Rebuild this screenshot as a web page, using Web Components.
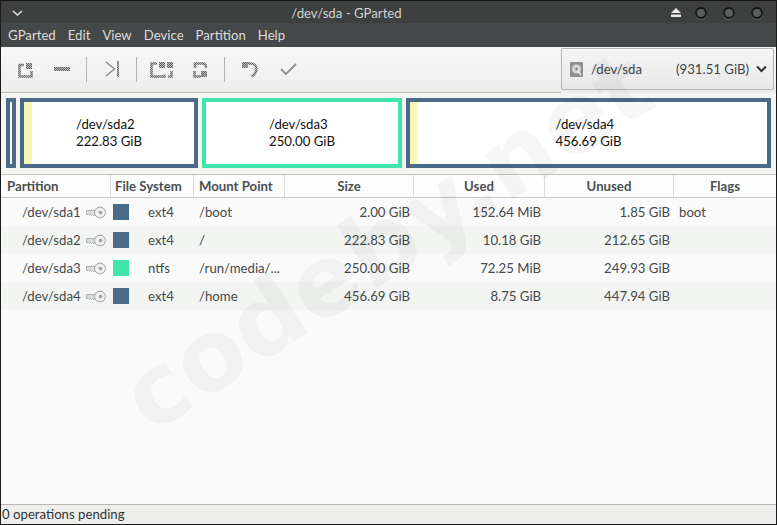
<!DOCTYPE html>
<html>
<head>
<meta charset="utf-8">
<title>/dev/sda - GParted</title>
<style>
  html, body { margin: 0; height: 100%; background: #fafafa; }
  body { font: 13.2px Lato, "Open Sans", sans-serif; color: #2e3436; overflow: hidden; }
</style>
</head>
<body>
<gp-window>
  <gp-titlebar slot="top">/dev/sda - GParted</gp-titlebar>
  <gp-menubar slot="top"></gp-menubar>
  <gp-toolbar slot="top"></gp-toolbar>
  <gp-diskmap slot="top"></gp-diskmap>
  <gp-table></gp-table>
  <gp-statusbar slot="bottom">0 operations pending</gp-statusbar>
</gp-window>
<gp-watermark>codeby.net</gp-watermark>

<script>
// checker fill so the toolbar icons get the same dithered look as the screenshot
const DITHER = `<defs><pattern id="d" width="2" height="2" patternUnits="userSpaceOnUse">
  <rect width="2" height="2" fill="#b8b8b8"/><rect width="1" height="1" fill="#666"/><rect x="1" y="1" width="1" height="1" fill="#666"/>
</pattern></defs>`;

class GpWindow extends HTMLElement {
  constructor() {
    super();
    this.attachShadow({ mode: 'open' });
    this.shadowRoot.innerHTML = `
      <style>
        :host { display: flex; flex-direction: column; box-sizing: border-box; width: 777px; height: 525px;
          border: 1px solid #1c1c1c; border-top: 0; background: #fafafa; }
        .main { flex: 1; min-height: 0; display: flex; flex-direction: column; }
      </style>
      <slot name="top"></slot>
      <div class="main"><slot></slot></div>
      <slot name="bottom"></slot>`;
  }
}

class GpTitlebar extends HTMLElement {
  constructor() {
    super();
    this.attachShadow({ mode: 'open' });
    this.shadowRoot.innerHTML = `
      <style>
        :host { display: flex; align-items: center; height: 23px; box-sizing: border-box; padding: 1px 13px 0 10px;
          background: #3e3f3f; border-top: 1px solid #151515; color: #d2d3d3; position: relative; }
        .menu { width: 13px; height: 8px; }
        .title { position: absolute; left: 0; right: 84px; text-align: center; top: 2px; line-height: 20px; }
        .right { margin-left: auto; display: flex; align-items: center; gap: 16px; z-index: 1; }
        .eject { width: 10px; height: 9px; margin-right: -2px; }
        .dot { width: 12px; height: 12px; border-radius: 50%; box-sizing: border-box;
          background: #5c5f5f; border: 2px solid #161616; box-shadow: 0 1px 0 #666; }
      </style>
      <svg class="menu" viewBox="0 0 13 8"><path d="M2 2l4.5 4L11 2" fill="none" stroke="#e2e2e2" stroke-width="1.6"/></svg>
      <span class="title"><slot></slot></span>
      <div class="right">
        <svg class="eject" viewBox="0 0 10 9"><path d="M5 0l5 5H0z M0 6.5h10V9H0z" fill="#ececec"/></svg>
        <span class="dot"></span><span class="dot"></span><span class="dot"></span>
      </div>`;
  }
}

class GpMenubar extends HTMLElement {
  constructor() {
    super();
    this.attachShadow({ mode: 'open' });
    const items = ['GParted', 'Edit', 'View', 'Device', 'Partition', 'Help'];
    this.shadowRoot.innerHTML = `
      <style>
        :host { display: flex; height: 24px; align-items: center; box-sizing: border-box; padding: 0 7px 1px;
          gap: 12px; background: #454848; color: #dcdcdc; }
      </style>
      ${items.map(i => `<span>${i}</span>`).join('')}`;
  }
}

class GpToolbar extends HTMLElement {
  constructor() {
    super();
    this.attachShadow({ mode: 'open' });
    const ic = (body, w = 20) => `<svg width="${w}" height="20" viewBox="0 0 ${w} 20">${body}</svg>`;
    const gap = w => `<span style="width:${w}px"></span>`;
    const stroke = 'fill="none" stroke="url(#d)" stroke-width="2.6"';
    this.shadowRoot.innerHTML = `
      <style>
        :host { display: flex; align-items: flex-start; height: 46px; box-sizing: border-box;
          background: linear-gradient(#f7f7f7, #eceeec); }
        .icons { display: flex; flex: 1; align-items: center; box-sizing: border-box; height: 46px; padding: 0 0 1px 15px;
          border-bottom: 1px solid #b8b8b4; }
        svg { display: block; flex: none; }
        .sep { width: 1px; height: 25px; background: #b3b3b3; }
        .combo { margin: 1px 2px 0 0; width: 213px; height: 42px; box-sizing: border-box; display: flex; align-items: center;
          padding: 0 6px 0 8px; background: linear-gradient(#f5f5f5, #e8e8e8); border: 1px solid #b3b3b3; border-radius: 2px;
          box-shadow: 0 1px 0 #fff inset; color: #3f4547; }
        .dev { margin-left: 8px; }
        .size { margin-left: auto; margin-right: 7px; }
      </style>
      <div class="icons">
        <svg width="0" height="0" style="position:absolute">${DITHER}</svg>
        ${ic(`<path d="M8 6H3.5v11.5h12V12" ${stroke}/><rect x="10" y="4" width="6" height="6" fill="url(#d)"/>`, 17)}
        ${gap(21)}
        ${ic(`<rect x="0" y="8" width="16" height="4" fill="url(#d)"/>`, 16)}
        ${gap(16)}<span class="sep"></span>${gap(18)}
        ${ic(`<path d="M1 3l8.5 7L1 17" fill="none" stroke="#888" stroke-width="1.3"/><rect x="12" y="2" width="2" height="16" fill="url(#d)"/>`, 14)}
        ${gap(17)}<span class="sep"></span>${gap(13)}
        ${ic(`<path d="M7 4.5H1.5v13h13v-2" ${stroke}/><rect x="9" y="3" width="6" height="6" fill="url(#d)"/><rect x="17" y="3" width="6" height="6" fill="url(#d)"/><path d="M21.5 12v5.5H18" ${stroke}/>`, 23)}
        ${gap(20)}
        ${ic(`<path d="M2 9V4.5h9l2 2V9 M1.5 12v5.5H8" ${stroke}/><rect x="8" y="12" width="6" height="6" fill="url(#d)"/>`, 14)}
        ${gap(17)}<span class="sep"></span>${gap(17)}
        ${ic(`<rect x="0" y="3" width="6" height="6" fill="url(#d)"/><path d="M5 4.5h4a5.5 5.5 0 0 1 5.5 5.5c0 3-2 5.5-5 7.5" ${stroke}/>`)}
        ${gap(18)}
        ${ic(`<path d="M1 10l5 5L16 5" fill="none" stroke="#8f8f8f" stroke-width="1.8"/>`, 17)}
      </div>
      <div class="combo">
        <svg width="13" height="15" viewBox="0 0 13 15">
          <rect width="13" height="15" rx="1" fill="#8e9191"/>
          <circle cx="6.5" cy="7" r="4.5" fill="#d6d8d8"/><circle cx="6.5" cy="7" r="1.3" fill="#7a7d7d"/>
          <path d="M8 9l3 4" stroke="#eee" stroke-width="1.4"/>
        </svg>
        <span class="dev">/dev/sda</span>
        <span class="size">(931.51 GiB)</span>
        <svg width="11" height="8" viewBox="0 0 11 8"><path d="M1 1.5l4.5 4.5L10 1.5" fill="none" stroke="#2e3436" stroke-width="2"/></svg>
      </div>`;
  }
}

class GpPartition extends HTMLElement {
  constructor() {
    super();
    this.attachShadow({ mode: 'open' });
    const used = this.getAttribute('used') || 0;
    this.shadowRoot.innerHTML = `
      <style>
        :host { display: block; box-sizing: border-box; height: 70px; border: 4px solid var(--c); background: #fff;
          position: relative; color: #111; }
        .used { position: absolute; left: 0; top: 0; bottom: 0; width: ${used}px; background: #f7f6b4; }
        .label { height: 100%; display: flex; justify-content: center; align-items: center; line-height: 17px; position: relative; }
      </style>
      <div class="used"></div>
      <div class="label"><div><slot></slot></div></div>`;
  }
}

class GpDiskmap extends HTMLElement {
  constructor() {
    super();
    this.attachShadow({ mode: 'open' });
    const parts = [
      [10, '#4a6a87', 0, ''],
      [178, '#4a6a87', 8, '/dev/sda2<br>222.83 GiB'],
      [200, '#40e5ab', 0, '/dev/sda3<br>250.00 GiB'],
      [365, '#4a6a87', 7, '/dev/sda4<br>456.69 GiB'],
    ];
    this.shadowRoot.innerHTML = `
      <style>
        :host { display: flex; gap: 4px; box-sizing: border-box; height: 81px; padding: 5px 5px 0; background: #f4f5f3; }
      </style>
      ${parts.map(([w, c, u, t]) => `<gp-partition used="${u}" style="width:${w}px;--c:${c}">${t}</gp-partition>`).join('')}`;
  }
}

class GpTable extends HTMLElement {
  constructor() {
    super();
    this.attachShadow({ mode: 'open' });
    const cols = '110px 83px 91px 129px 131px 129px 1fr';
    const heads = ['Partition', 'File System', 'Mount Point', 'Size', 'Used', 'Unused', 'Flags'];
    const rows = [
      ['/dev/sda1', '#4a6a87', 'ext4', '/boot', '2.00 GiB', '152.64 MiB', '1.85 GiB', 'boot'],
      ['/dev/sda2', '#4a6a87', 'ext4', '/', '222.83 GiB', '10.18 GiB', '212.65 GiB', ''],
      ['/dev/sda3', '#40e5ab', 'ntfs', '/run/media/...', '250.00 GiB', '72.25 MiB', '249.93 GiB', ''],
      ['/dev/sda4', '#4a6a87', 'ext4', '/home', '456.69 GiB', '8.75 GiB', '447.94 GiB', ''],
    ];
    const key = `<svg class="key" width="20" height="13" viewBox="0 0 20 13">
      <path d="M0.5 4.5h9v4.5l-2 .5-1-1-1 1-1-1-1 1-1-1-2 0z" fill="#dadada" stroke="#a2a2a2" stroke-width=".8"/>
      <circle cx="14" cy="6.5" r="5.4" fill="#efefef" stroke="#a2a2a2"/><circle cx="14.5" cy="6.5" r="1.8" fill="#a2a2a2"/></svg>`;
    this.shadowRoot.innerHTML = `
      <style>
        :host { display: block; flex: 1; color: #45494b; border-top: 1px solid #c4c4c0; }
        .row { display: grid; grid-template-columns: ${cols}; height: 28px; align-items: center; }
        .head { height: 23px; box-sizing: border-box; background: #fdfdfd; border-bottom: 1px solid #c8c8c4; color: #4a5052; font-weight: 700; }
        .head span { height: 100%; display: flex; align-items: center; justify-content: center; box-sizing: border-box;
          border-right: 1px solid #dcdcd8; }
        .head span:nth-child(-n+3) { justify-content: flex-start; padding-left: 5px; }
        .head span:first-child { padding-left: 6px; }
        .head span:nth-child(2) { padding-left: 4px; }
        .head span:last-child { border-right: 0; }
        /* style element is child 1, header child 2, so even children are rows 2 and 4 */
        .row:nth-child(even):not(.head) { background: #f3f5f2; }
        .p { display: flex; align-items: center; padding-left: 21px; }
        .name { width: 64px; }
        .fs { display: flex; align-items: center; padding-left: 2px; }
        .sw { width: 16px; height: 16px; margin-right: 19px; }
        .m { padding-left: 5px; }
        .n { text-align: right; padding-right: 4px; }
        .f { padding-left: 5px; }
      </style>
      <div class="row head">${heads.map(h => `<span>${h}</span>`).join('')}</div>
      ${rows.map(r => `<div class="row">
        <div class="p"><span class="name">${r[0]}</span>${key}</div>
        <div class="fs"><i class="sw" style="background:${r[1]}"></i>${r[2]}</div>
        <div class="m">${r[3]}</div>
        <div class="n">${r[4]}</div><div class="n">${r[5]}</div><div class="n">${r[6]}</div>
        <div class="f">${r[7]}</div>
      </div>`).join('')}`;
  }
}

class GpStatusbar extends HTMLElement {
  constructor() {
    super();
    this.attachShadow({ mode: 'open' });
    this.shadowRoot.innerHTML = `
      <style>
        :host { display: flex; align-items: center; height: 20px; box-sizing: border-box; padding: 0 0 2px 1px;
          background: #eeefec; border-top: 1px solid #b8b8b4; color: #2e3436; }
      </style>
      <slot></slot>`;
  }
}

// big translucent stamp across the whole shot
class GpWatermark extends HTMLElement {
  constructor() {
    super();
    this.attachShadow({ mode: 'open' });
    this.shadowRoot.innerHTML = `
      <style>
        :host { position: absolute; left: 83px; top: 184px; transform: rotate(-33deg); transform-origin: 50% 50%;
          font: bold 98px "DejaVu Sans", sans-serif; color: rgba(0, 0, 0, 0.036); white-space: nowrap; pointer-events: none; }
      </style>
      <slot></slot>`;
  }
}

customElements.define('gp-window', GpWindow);
customElements.define('gp-titlebar', GpTitlebar);
customElements.define('gp-menubar', GpMenubar);
customElements.define('gp-toolbar', GpToolbar);
customElements.define('gp-partition', GpPartition);
customElements.define('gp-diskmap', GpDiskmap);
customElements.define('gp-table', GpTable);
customElements.define('gp-statusbar', GpStatusbar);
customElements.define('gp-watermark', GpWatermark);
</script>
</body>
</html>
